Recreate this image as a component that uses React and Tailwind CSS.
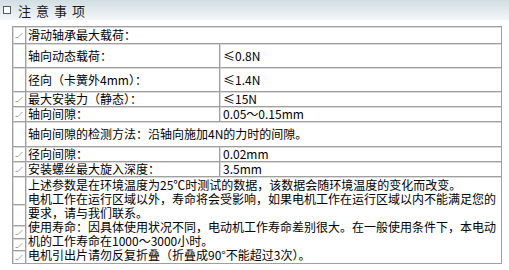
import React from "react";

const Mark = () => (
  <svg width="8" height="6" viewBox="0 0 8 6" className="block">
    <path d="M0.5 5.5 L3 5.5 L7.5 1" fill="none" stroke="#a3a3a3" strokeWidth="1" />
  </svg>
);

const cell = "border-t border-l border-[#a0a0a0] shadow-[inset_1px_1px_0_#dadada]";

const Row = ({ h, mark, label, value }) => (
  <div className="flex" style={{ height: h }}>
    <div className={`${cell} w-[13px] shrink-0 flex items-center justify-center`}>
      {mark && <Mark />}
    </div>
    {value === undefined ? (
      <div className={`${cell} flex-1 flex items-center pl-[2px] whitespace-nowrap`}>{label}</div>
    ) : (
      <>
        <div className={`${cell} w-[194px] shrink-0 flex items-center pl-[2px] whitespace-nowrap`}>{label}</div>
        <div className={`${cell} flex-1 flex items-center pl-[3px] whitespace-nowrap`}>{value}</div>
      </>
    )}
  </div>
);

const rows = [
  { h: 17, mark: true, label: "滑动轴承最大载荷：" },
  { h: 24, mark: false, label: "轴向动态载荷：", value: "≤0.8N" },
  { h: 24, mark: false, label: "径向（卡簧外4mm）：", value: "≤1.4N" },
  { h: 15, mark: true, label: "最大安装力（静态）：", value: "≤15N" },
  { h: 15, mark: true, label: "轴向间隙：", value: "0.05～0.15mm" },
  { h: 25, mark: false, label: "轴向间隙的检测方法：沿轴向施加4N的力时的间隙。" },
  { h: 15, mark: true, label: "径向间隙：", value: "0.02mm" },
  { h: 15, mark: true, label: "安装螺丝最大旋入深度：", value: "3.5mm" },
];

const side = [
  { h: 28, mark: false },
  { h: 21, mark: false },
  { h: 13, mark: true },
  { h: 12, mark: true },
  { h: 13, mark: true },
];

const notes = [
  "上述参数是在环境温度为25℃时测试的数据，该数据会随环境温度的变化而改变。",
  "电机工作在运行区域以外，寿命将会受影响，如果电机工作在运行区域以内不能满足您的",
  "要求，请与我们联系。",
  "使用寿命：因具体使用状况不同，电动机工作寿命差别很大。在一般使用条件下，本电动",
  "机的工作寿命在1000～3000小时。",
  "电机引出片请勿反复折叠（折叠成90°不能超过3次）。",
];

export default function App() {
  return (
    <div className="w-[509px] h-[270px] bg-white text-black text-[12px] overflow-hidden font-['Noto_Sans_CJK_SC',sans-serif]">
      <div className="h-[20px] bg-gradient-to-b from-[#d2dee3] to-[#f3f6f7] flex items-center pl-[3px]">
        <div className="w-[8px] h-[8px] border border-[#5a5a5a] bg-white" />
        <span className="ml-[7px] text-[13px] tracking-[5px] text-[#1a1a1a] leading-none">注意事项</span>
      </div>

      <div className="ml-[12px] mt-[6px] w-[490px] border-r border-b border-[#a0a0a0]">
        {rows.map((r, i) => (
          <Row key={i} {...r} />
        ))}
        <div className="flex">
          <div className="w-[13px] shrink-0 flex flex-col">
            {side.map((s, i) => (
              <div key={i} className={`${cell} flex items-center justify-center`} style={{ height: s.h }}>
                {s.mark && <Mark />}
              </div>
            ))}
          </div>
          <div className={`${cell} flex-1 pl-[2px] pt-[1px] leading-[14px] whitespace-nowrap`}>
            {notes.map((n, i) => (
              <div key={i}>{n}</div>
            ))}
          </div>
        </div>
      </div>
    </div>
  );
}
